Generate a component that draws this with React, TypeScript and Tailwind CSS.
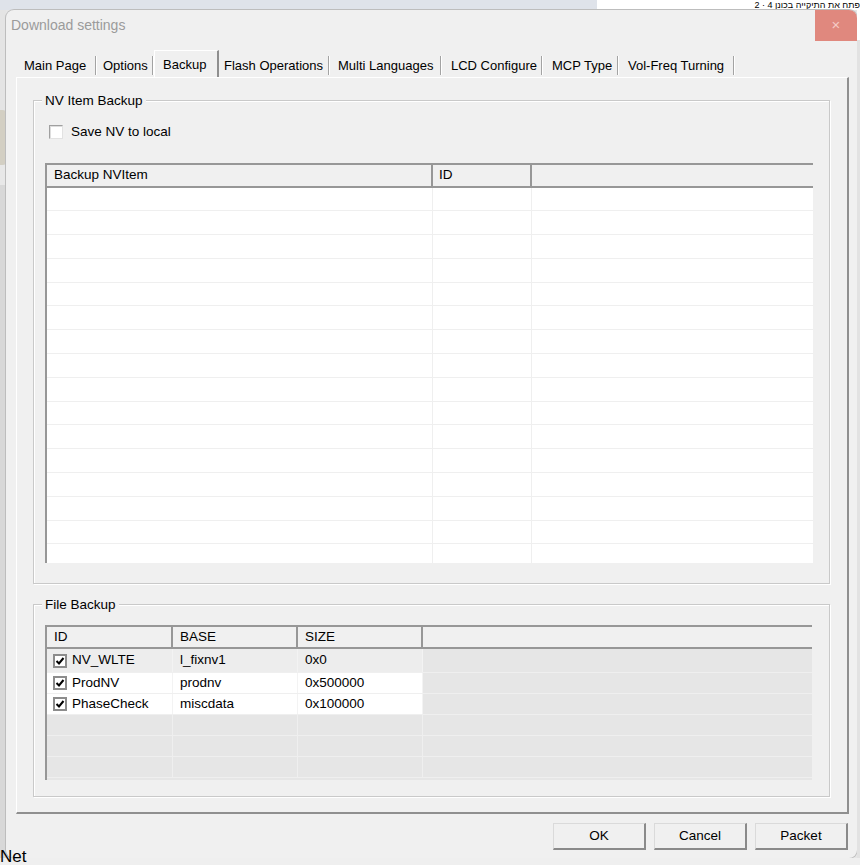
import React from "react";

const tabs = [
  { label: "Main Page", cls: "w-[79px] pl-[6px]" },
  { label: "Options", cls: "w-[57px] pl-[6px]" },
  { label: "Backup", cls: "w-[65px] pl-[8px]", active: true },
  { label: "Flash Operations", cls: "w-[111px] pl-[5px]" },
  { label: "Multi Languages", cls: "w-[112px] pl-[8px]" },
  { label: "LCD Configure", cls: "w-[101px] pl-[9px]" },
  { label: "MCP Type", cls: "w-[76px] pl-[9px]" },
  { label: "Vol-Freq Turning", cls: "w-[116px] pl-[9px]" },
];

const files = [
  { id: "NV_WLTE", base: "l_fixnv1", size: "0x0", bg: "bg-[#ededed]", h: "h-[24px]" },
  { id: "ProdNV", base: "prodnv", size: "0x500000", bg: "bg-white", h: "h-[21px]" },
  { id: "PhaseCheck", base: "miscdata", size: "0x100000", bg: "bg-white", h: "h-[21px]" },
];

const nvRows = Array.from({ length: 17 });
const emptyRows = [0, 1, 2];

const Check = () => (
  <span className="flex w-[14px] h-[14px] shrink-0 items-center justify-center border-2 border-[#8c8c8c] bg-white">
    <svg width="10" height="10" viewBox="0 0 10 10">
      <path d="M1.5 5 L4 7.5 L8.5 2" fill="none" stroke="#000" strokeWidth="2" />
    </svg>
  </span>
);

const GroupLabel = ({ text }: { text: string }) => (
  <span className="absolute top-[-8px] left-[8px] px-[3px] bg-[#f0f0f0] text-[13.5px] leading-[16px] text-black">
    {text}
  </span>
);

const Button = ({ text }: { text: string }) => (
  <div className="flex w-[93px] h-[27px] items-center justify-center bg-[#f0f0f0] border-t border-l border-[#dadada] border-r-2 border-b-2 border-r-[#8a8a8a] border-b-[#8a8a8a] text-[13.5px] text-black">
    {text}
  </div>
);

export default function App() {
  return (
    <div className="w-[860px] h-[865px] overflow-hidden flex flex-col bg-[#e6e6e6] font-[family-name:'Liberation_Sans',Arial,sans-serif]">
      {/* strip of the window behind */}
      <div className="flex h-[10px] shrink-0">
        <div className="w-[597px] bg-[#dfe3ea]" />
        <div className="flex-1 bg-white overflow-hidden">
          <div className="pl-[8px] text-[9px] leading-[10px] text-black whitespace-nowrap" dir="rtl">
            פתח את התיקייה בכונן 4 · 2
          </div>
        </div>
      </div>

      <div className="flex h-[848px] shrink-0">
        {/* left gutter */}
        <div className="w-[6px] flex flex-col bg-[#dcdcdc]">
          <div className="h-[100px] bg-[#e4e4e4]" />
          <div className="h-[55px] bg-[#d3cfc3] rounded-r-[4px]" />
          <div className="h-[20px] bg-[#e8e8e8]" />
          <div className="flex-1 bg-[#d8d8d8]" />
        </div>

        {/* dialog */}
        <div className="w-[851px] flex flex-col rounded-[8px] overflow-hidden bg-[#f0f0f0] shadow-[0_0_0_1px_#bdbdbd]">
          {/* title bar */}
          <div className="flex h-[31px] shrink-0 items-center justify-between">
            <span className="pl-[5px] text-[14px] text-[#9b9b9b]">Download settings</span>
            <div className="flex w-[42px] h-[31px] items-center justify-center bg-[#e0887e] text-[15px] text-[#f5cbc5]">
              ×
            </div>
          </div>

          {/* tabs */}
          <div className="flex h-[27px] mt-[9px] ml-[12px] items-end">
            {tabs.map((t) =>
              t.active ? (
                <div
                  key={t.label}
                  className={`flex h-[27px] items-start pt-[4px] bg-[#f0f0f0] border-l border-t border-white border-r-2 border-r-[#8f8f8f] text-[13px] text-black whitespace-nowrap ${t.cls}`}
                >
                  {t.label}
                </div>
              ) : (
                <div
                  key={t.label}
                  className={`flex h-[23px] items-center justify-between text-[13px] text-black whitespace-nowrap ${t.cls}`}
                >
                  <span>{t.label}</span>
                  <span className="w-[2px] h-[19px] bg-[#a3a3a3] border-r border-white" />
                </div>
              )
            )}
          </div>

          {/* tab panel */}
          <div className="ml-[10px] w-[833px] h-[737px] shrink-0 pl-[16px] pt-[22px] border-l border-t border-white border-r-2 border-b-2 border-r-[#8f8f8f] border-b-[#8f8f8f]">
            {/* NV Item Backup */}
            <div className="relative w-[797px] h-[484px] border border-[#c9c9c9] shadow-[inset_1px_1px_0_#fff,1px_1px_0_#fff] pt-[24px] pl-[11px]">
              <GroupLabel text="NV Item Backup" />
              <div className="flex h-[14px] ml-[4px] items-center gap-[8px]">
                <span className="w-[14px] h-[14px] border border-[#a0a0a0] border-r-[#e2e2e2] border-b-[#e2e2e2] bg-white shadow-[inset_1px_1px_0_#dedede]" />
                <span className="text-[13.5px] text-black">Save NV to local</span>
              </div>

              <div className="mt-[24px] w-[768px] h-[400px] overflow-hidden bg-white border-l-2 border-t-2 border-[#979797]">
                <div className="flex h-[22.5px] bg-[#f0f0f0] border-b-2 border-[#979797] text-[13.5px] text-black">
                  <div className="w-[386px] pl-[7px] flex items-center border-r-2 border-[#979797]">Backup NVItem</div>
                  <div className="w-[99px] pl-[6px] flex items-center border-r-2 border-[#979797]">ID</div>
                  <div className="flex-1" />
                </div>
                {nvRows.map((_, i) => (
                  <div key={i} className="flex h-[23.8px] border-b border-[#efefef]">
                    <div className="w-[386px] border-r border-[#efefef]" />
                    <div className="w-[99px] border-r border-[#efefef]" />
                    <div className="flex-1" />
                  </div>
                ))}
              </div>
            </div>

            {/* File Backup */}
            <div className="relative mt-[20px] w-[797px] h-[193px] border border-[#c9c9c9] shadow-[inset_1px_1px_0_#fff,1px_1px_0_#fff] pt-[20px] pl-[11px]">
              <GroupLabel text="File Backup" />
              <div className="w-[767px] h-[155px] overflow-hidden bg-[#e6e6e6] border-l-2 border-t-2 border-[#979797] text-[13.5px] text-black">
                <div className="flex h-[22px] bg-[#f0f0f0] border-b-2 border-[#979797]">
                  <div className="w-[126px] pl-[7px] flex items-center border-r-2 border-[#979797]">ID</div>
                  <div className="w-[125px] pl-[7px] flex items-center border-r-2 border-[#979797]">BASE</div>
                  <div className="w-[125px] pl-[7px] flex items-center border-r-2 border-[#979797]">SIZE</div>
                  <div className="flex-1" />
                </div>
                {files.map((f) => (
                  <div key={f.id} className={`flex border-b border-[#efefef] ${f.h}`}>
                    <div className={`w-[126px] pl-[6px] flex items-center gap-[5px] border-r border-[#f3f3f3] ${f.bg}`}>
                      <Check />
                      <span>{f.id}</span>
                    </div>
                    <div className={`w-[125px] pl-[7px] flex items-center border-r border-[#f3f3f3] ${f.bg}`}>{f.base}</div>
                    <div className={`w-[125px] pl-[7px] flex items-center border-r border-[#f3f3f3] ${f.bg}`}>{f.size}</div>
                    <div className="flex-1 bg-[#e6e6e6]" />
                  </div>
                ))}
                {emptyRows.map((i) => (
                  <div key={i} className="flex h-[21px] border-b border-[#efefef]">
                    <div className="w-[126px] border-r border-[#efefef]" />
                    <div className="w-[125px] border-r border-[#efefef]" />
                    <div className="w-[125px] border-r border-[#efefef]" />
                    <div className="flex-1" />
                  </div>
                ))}
              </div>
            </div>
          </div>

          {/* buttons */}
          <div className="flex ml-[10px] w-[833px] mt-[9px] pr-[1px] justify-end gap-[8px]">
            <Button text="OK" />
            <Button text="Cancel" />
            <Button text="Packet" />
          </div>
        </div>

        {/* right gutter */}
        <div className="w-[3px] flex flex-col bg-[#e2e2e2]">
          <div className="h-[30px] bg-white" />
          <div className="flex-1" />
        </div>
      </div>

      {/* bottom strip */}
      <div className="relative h-[7px] shrink-0 bg-[#efefef]">
        <span className="absolute left-0 top-[-10px] text-[17px] leading-[18px] text-black">Net</span>
      </div>
    </div>
  );
}
